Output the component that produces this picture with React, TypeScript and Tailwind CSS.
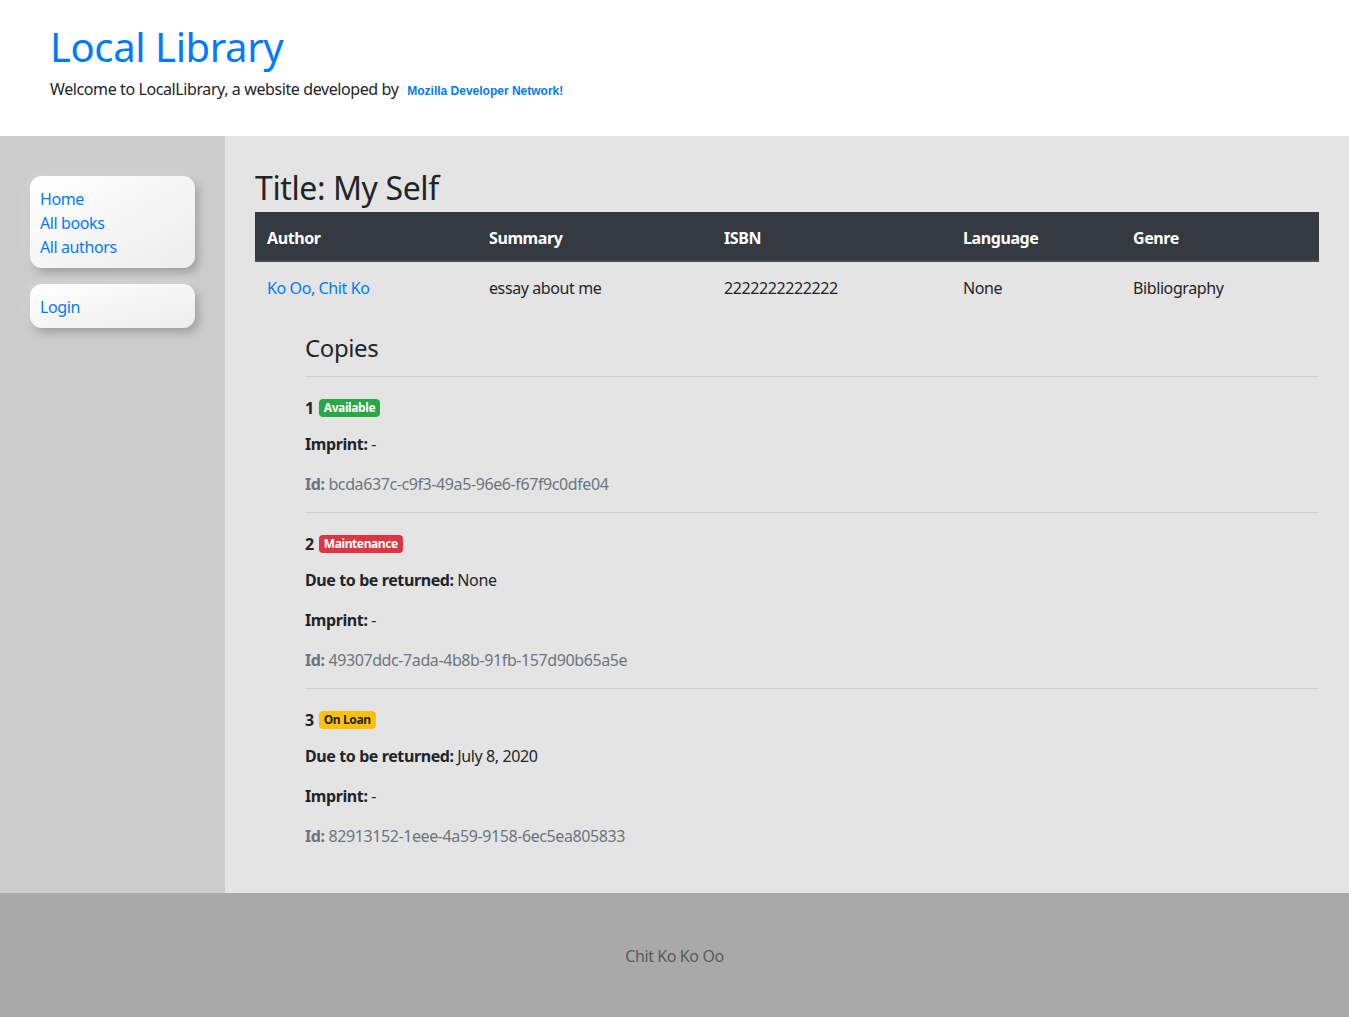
const copies = [
  { n: 1, status: 'Available', badge: 'bg-[#28a745] text-white', due: null, id: 'bcda637c-c9f3-49a5-96e6-f67f9c0dfe04' },
  { n: 2, status: 'Maintenance', badge: 'bg-[#dc3545] text-white', due: 'None', id: '49307ddc-7ada-4b8b-91fb-157d90b65a5e' },
  { n: 3, status: 'On Loan', badge: 'bg-[#ffc107] text-[#212529]', due: 'July 8, 2020', id: '82913152-1eee-4a59-9158-6ec5ea805833' }
]

const card =
  'rounded-xl bg-gradient-to-br from-white to-[#ededed] px-[10px] pt-[11px] pb-[9px] shadow-[3px_4px_8px_rgba(0,0,0,0.28),0_0_10px_rgba(255,255,255,0.5)]'

const th = 'border-b-2 border-[#454d55] px-3 pt-[14px] pb-[10px] leading-6 font-bold'
const td = 'px-3 pt-[14px] pb-[10px] leading-6'

export default function App() {
  return (
    <div className="min-h-screen font-['Noto_Sans',sans-serif] text-base tracking-[-0.025em] text-[#212529]">
      <header className="h-[136px] bg-white px-[50px] pt-[23px]">
        <h1 className="text-[40px] leading-[48px] text-[#007bff]">Local Library</h1>
        <p className="mt-[6px] leading-6">
          Welcome to LocalLibrary, a website developed by{' '}
          <a className="ml-[5px] font-['Liberation_Sans',sans-serif] text-[12px] font-bold tracking-normal text-[#007bff]">
            Mozilla Developer Network!
          </a>
        </p>
      </header>

      <div className="flex">
        <aside className="w-[225px] shrink-0 bg-[#cccccc] px-[30px] pt-[40px]">
          <ul className={card}>
            <li className="leading-6 text-[#007bff]">Home</li>
            <li className="leading-6 text-[#007bff]">All books</li>
            <li className="leading-6 text-[#007bff]">All authors</li>
          </ul>
          <ul className={`${card} mt-4`}>
            <li className="leading-6 text-[#007bff]">Login</li>
          </ul>
        </aside>

        <main className="flex-1 bg-[#e4e4e4] px-[30px] pt-[33px] pb-[29px]">
          <h2 className="text-[32px] leading-[38px]">Title: My Self</h2>
          <table className="mt-[5px] w-full table-fixed border-collapse">
            <colgroup>
              <col className="w-[222px]" />
              <col className="w-[235px]" />
              <col className="w-[239px]" />
              <col className="w-[170px]" />
              <col />
            </colgroup>
            <thead>
              <tr className="bg-[#343a40] text-left text-white">
                <th className={th}>Author</th>
                <th className={th}>Summary</th>
                <th className={th}>ISBN</th>
                <th className={th}>Language</th>
                <th className={th}>Genre</th>
              </tr>
            </thead>
            <tbody>
              <tr>
                <td className={`${td} text-[#007bff]`}>Ko Oo, Chit Ko</td>
                <td className={td}>essay about me</td>
                <td className={td}>2222222222222</td>
                <td className={td}>None</td>
                <td className={td}>Bibliography</td>
              </tr>
            </tbody>
          </table>

          <div className="ml-[50px] mt-[23px]">
            <h4 className="text-2xl leading-[29px]">Copies</h4>
            <div className="mt-[14px]">
              {copies.map((c) => (
                <div key={c.n}>
                  <hr className="border-t border-black/10" />
                  <div className="mt-[19px] mb-[12px] flex h-6 items-center gap-[5px]">
                    <strong>{c.n}</strong>
                    <span className={`rounded px-[5px] text-[12px] font-bold leading-[18px] ${c.badge}`}>
                      {c.status}
                    </span>
                  </div>
                  {c.due && (
                    <p className="mb-4 leading-6">
                      <strong>Due to be returned:</strong> {c.due}
                    </p>
                  )}
                  <p className="mb-4 leading-6">
                    <strong>Imprint:</strong> -
                  </p>
                  <p className="mb-4 leading-6 text-[#6c757d]">
                    <strong>Id:</strong> {c.id}
                  </p>
                </div>
              ))}
            </div>
          </div>
        </main>
      </div>

      <footer className="flex h-[124px] items-center justify-center bg-[#a9a9a9] pt-[2px] text-[#5a5a5a]">
        Chit Ko Ko Oo
      </footer>
    </div>
  )
}
